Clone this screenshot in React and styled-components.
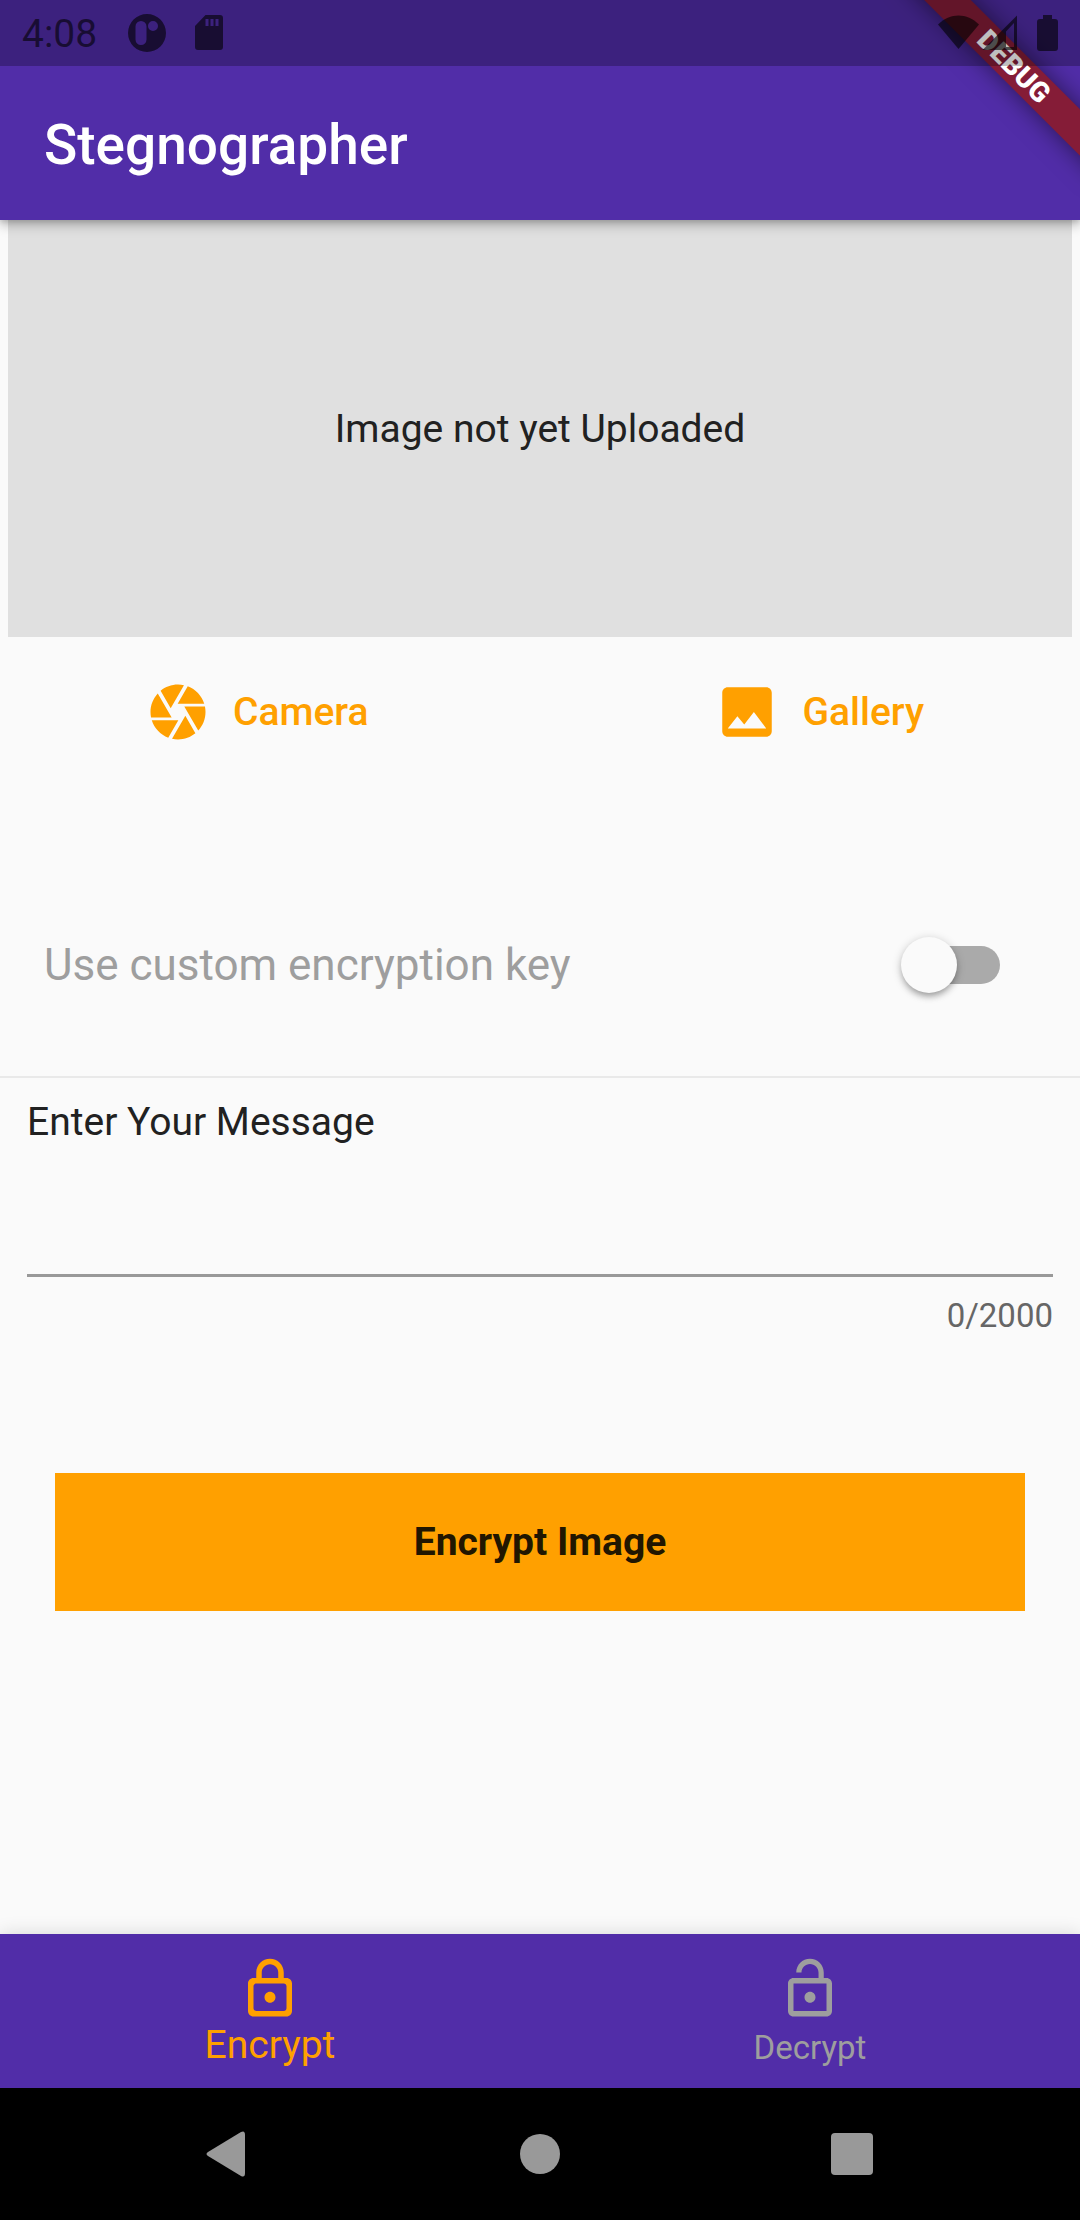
import React, { useState } from 'react';
import styled, { createGlobalStyle } from 'styled-components';

const GlobalStyle = createGlobalStyle`
  * { box-sizing: border-box; }
  body {
    margin: 0;
    background: #fafafa;
    color: #212121;
    font-family: Roboto, "Liberation Sans", sans-serif;
    font-size: 39px;
    line-height: 46px;
  }
  button, input { font: inherit; color: inherit; }
  button { border: 0; background: none; padding: 0; cursor: pointer; }
`;

const Screen = styled.div`
  min-height: 100vh;
  display: flex;
  flex-direction: column;
`;

const Header = styled.header`
  position: relative;
  z-index: 1;
  background: #512da8;
  color: #fff;
  box-shadow: 0 5px 11px rgba(0, 0, 0, 0.26), 0 2px 5px rgba(0, 0, 0, 0.12);
`;

const StatusBar = styled.div`
  position: relative;
  z-index: 2;
  height: 66px;
  padding: 0 22px;
  display: flex;
  justify-content: space-between;
  align-items: center;
  background: rgba(0, 0, 0, 0.25);
  color: rgba(0, 0, 0, 0.6);
`;

const StatusGroup = styled.div`
  display: flex;
  align-items: center;
  gap: 29px;
`;

const Clock = styled.time`
  padding: 2px 2px 0 0;
`;

const Title = styled.h1`
  margin: 0;
  padding: 46px 44px 42px;
  font-size: 55px;
  line-height: 66px;
  font-weight: 500;
`;

const Corner = styled.div`
  position: absolute;
  inset: 0 0 auto auto;
  z-index: 1;
  width: 220px;
  height: 220px;
  overflow: hidden;
`;

const Ribbon = styled.div`
  position: absolute;
  top: 50px;
  right: -74px;
  width: 280px;
  transform: rotate(45deg);
  background: #851c37;
  box-shadow: 0 0 24px rgba(0, 0, 0, 0.5);
  font-size: 28px;
  line-height: 33px;
  font-weight: 900;
  text-align: center;
`;

const Main = styled.main`
  flex: 1;
`;

const Preview = styled.section`
  height: 417px;
  margin: 0 8px;
  display: flex;
  align-items: center;
  justify-content: center;
  background: #e0e0e0;
`;

const Sources = styled.div`
  display: flex;
  justify-content: space-between;
  padding: 9px 112px;
`;

const SourceButton = styled.button`
  height: 132px;
  padding: 0 44px 0 33px !important;
  display: flex;
  align-items: center;
  gap: 22px;
  color: #ffa000 !important;
  font-weight: 500 !important;
`;

const KeyRow = styled.label`
  margin-top: 67px;
  height: 224px;
  padding: 0 80px 0 44px;
  display: flex;
  align-items: center;
  justify-content: space-between;
  border-bottom: 2px solid #e9e9e9;
  color: #9e9e9e;
  font-size: 44px;
`;

const Switch = styled.input`
  appearance: none;
  position: relative;
  width: 91px;
  height: 38px;
  margin: 0;
  border-radius: 19px;
  background: #aaa;
  cursor: pointer;
  &::before {
    content: '';
    position: absolute;
    top: -9px;
    left: -8px;
    width: 56px;
    height: 56px;
    border-radius: 50%;
    background: #fafafa;
    box-shadow: 0 5px 6px -2px rgba(0, 0, 0, 0.25), 0 2px 10px rgba(0, 0, 0, 0.22);
  }
  &:checked { background: #ffd080; }
  &:checked::before { left: 43px; background: #ffa000; }
`;

const Message = styled.div`
  padding: 21px 27px 0;
  display: flex;
  flex-direction: column;
`;

const MessageInput = styled.input`
  height: 132px;
  padding: 60px 0 20px;
  border: 0;
  border-bottom: 3px solid #999;
  border-radius: 0;
  background: transparent;
  outline: 0;
`;

const Counter = styled.output`
  margin-top: 19px;
  align-self: flex-end;
  color: #666;
  font-size: 33px;
  line-height: 39px;
`;

const SubmitButton = styled.button`
  display: block;
  width: calc(100% - 110px);
  height: 138px;
  margin: 138px 55px 0;
  background: #ffa000 !important;
  color: #211600 !important;
  font-weight: 700 !important;
`;

const Tabs = styled.nav`
  height: 154px;
  display: flex;
  background: #512da8;
  box-shadow: 0 0 18px rgba(0, 0, 0, 0.14);
`;

const Tab = styled.button`
  flex: 1;
  padding: 22px 0 21px !important;
  display: flex;
  flex-direction: column;
  align-items: center;
  justify-content: space-between;
  color: ${(p) => (p.$active ? '#ffa000' : '#9e9e9e')} !important;
  font-size: ${(p) => (p.$active ? 39 : 33)}px !important;
  line-height: ${(p) => (p.$active ? 44 : 38)}px !important;
`;

const SystemBar = styled.nav`
  height: 132px;
  padding: 0 72px;
  display: flex;
  align-items: center;
  justify-content: space-between;
  background: #000;
  color: #999;
`;

const SystemButton = styled.button`
  width: 314px;
  height: 132px;
  display: flex;
  align-items: center;
  justify-content: center;
`;

const Icon = ({ d, size = 66 }) => (
  <svg width={size} height={size} viewBox="0 0 24 24" fill="currentColor" aria-hidden="true" display="block">
    <path d={d} />
  </svg>
);

const icons = {
  camera:
    'M9.4 10.5l4.77-8.26C13.47 2.09 12.75 2 12 2c-2.4 0-4.6.85-6.32 2.25l3.66 6.35.06-.1zM21.54 9c-.92-2.92-3.15-5.26-6-6.34L11.88 9h9.66zm.26 1h-7.49l.29.5 4.76 8.25C21 16.97 22 14.61 22 12c0-.69-.07-1.35-.2-2zM8.54 12l-3.9-6.75C3.01 7.03 2 9.39 2 12c0 .69.07 1.35.2 2h7.49l-1.15-2zm-6.08 3c.92 2.92 3.15 5.26 6 6.34L12.12 15H2.46zm11.27 0l-3.9 6.76c.7.15 1.42.24 2.17.24 2.4 0 4.6-.85 6.32-2.25l-3.66-6.35-.93 1.6z',
  gallery:
    'M21 19V5c0-1.1-.9-2-2-2H5c-1.1 0-2 .9-2 2v14c0 1.1.9 2 2 2h14c1.1 0 2-.9 2-2zM8.5 13.5l2.5 3.01L14.5 12l4.5 6H5l3.5-4.5z',
  lock:
    'M18 8h-1V6c0-2.76-2.24-5-5-5S7 3.24 7 6v2H6c-1.1 0-2 .9-2 2v10c0 1.1.9 2 2 2h12c1.1 0 2-.9 2-2V10c0-1.1-.9-2-2-2zM9 6c0-1.66 1.34-3 3-3s3 1.34 3 3v2H9V6zm9 13c0 .55-.45 1-1 1H7c-.55 0-1-.45-1-1v-8c0-.55.45-1 1-1h10c.55 0 1 .45 1 1v8zm-6-2c1.1 0 2-.9 2-2s-.9-2-2-2-2 .9-2 2 .9 2 2 2z',
  unlock:
    'M12 17c1.1 0 2-.9 2-2s-.9-2-2-2-2 .9-2 2 .9 2 2 2zm6-9h-1V6c0-2.76-2.24-5-5-5S7 3.24 7 6h1.9c0-1.71 1.39-3.1 3.1-3.1 1.71 0 3.1 1.39 3.1 3.1v2H6c-1.1 0-2 .9-2 2v10c0 1.1.9 2 2 2h12c1.1 0 2-.9 2-2V10c0-1.1-.9-2-2-2zm0 12H6V10h12v10z',
};

function StatusIcons() {
  return (
    <svg width="124" height="44" viewBox="0 0 124 44" fill="currentColor" aria-hidden="true" display="block">
      <path d="M4 13.500C16 1.500 33 1.500 45 13.500L24.500 38z" />
      <path fillRule="evenodd" d="M83 4.500V39H48.500zM80 12L72 20.500V36h8z" />
      <path d="M109 4h9v4h3q3 0 3 3v26q0 3-3 3h-15q-3 0-3-3V11q0-3 3-3h3z" />
    </svg>
  );
}

export default function App() {
  const [custom, setCustom] = useState(false);
  const [message, setMessage] = useState('');
  const [tab, setTab] = useState('Encrypt');

  return (
    <Screen>
      <GlobalStyle />
      <Header>
        <StatusBar>
          <StatusGroup>
            <Clock>4:08</Clock>
            <svg width="38" height="38" viewBox="0 0 38 38" fill="currentColor" aria-hidden="true">
              <path
                fillRule="evenodd"
                d="M19 0a19 19 0 1 1 0 38a19 19 0 1 1 0-38zM13 7a5.500 5.500 0 0 0-5.500 5.500v13a5.500 5.500 0 0 0 11 0v-13A5.500 5.500 0 0 0 13 7zM25 7a5 5 0 1 0 0 10a5 5 0 1 0 0-10z"
              />
            </svg>
            <svg width="28" height="36" viewBox="0 0 28 36" fill="currentColor" aria-hidden="true">
              <path
                fillRule="evenodd"
                d="M10.500 0H25q3 0 3 3v29q0 3-3 3H3q-3 0-3-3V11zM10.500 4v7h3V4zM15.500 4v7h3V4zM20.500 4v7h3V4z"
              />
            </svg>
          </StatusGroup>
          <StatusIcons />
        </StatusBar>
        <Title>Stegnographer</Title>
        <Corner>
          <Ribbon>DEBUG</Ribbon>
        </Corner>
      </Header>

      <Main>
        <Preview>Image not yet Uploaded</Preview>
        <Sources>
          <SourceButton type="button">
            <Icon d={icons.camera} />
            Camera
          </SourceButton>
          <SourceButton type="button">
            <Icon d={icons.gallery} />
            Gallery
          </SourceButton>
        </Sources>
        <KeyRow>
          Use custom encryption key
          <Switch type="checkbox" role="switch" checked={custom} onChange={(e) => setCustom(e.target.checked)} />
        </KeyRow>
        <Message>
          <label htmlFor="message">Enter Your Message</label>
          <MessageInput
            id="message"
            maxLength={2000}
            value={message}
            onChange={(e) => setMessage(e.target.value)}
          />
          <Counter htmlFor="message">{message.length}/2000</Counter>
        </Message>
        <SubmitButton type="button">Encrypt Image</SubmitButton>
      </Main>

      <Tabs>
        <Tab type="button" $active={tab === 'Encrypt'} onClick={() => setTab('Encrypt')}>
          <Icon d={icons.lock} />
          Encrypt
        </Tab>
        <Tab type="button" $active={tab === 'Decrypt'} onClick={() => setTab('Decrypt')}>
          <Icon d={icons.unlock} />
          Decrypt
        </Tab>
      </Tabs>
      <SystemBar>
        <SystemButton type="button" aria-label="Back">
          <svg width="44" height="46" viewBox="0 0 44 46" fill="currentColor">
            <path d="M2 21L35 1q4-2 4 3v38q0 5-4 3L2 25q-3-2 0-4z" />
          </svg>
        </SystemButton>
        <SystemButton type="button" aria-label="Home">
          <svg width="42" height="42" viewBox="0 0 42 42" fill="currentColor">
            <circle cx="21" cy="21" r="20" />
          </svg>
        </SystemButton>
        <SystemButton type="button" aria-label="Overview">
          <svg width="42" height="42" viewBox="0 0 42 42" fill="currentColor">
            <rect width="42" height="42" rx="4" />
          </svg>
        </SystemButton>
      </SystemBar>
    </Screen>
  );
}
